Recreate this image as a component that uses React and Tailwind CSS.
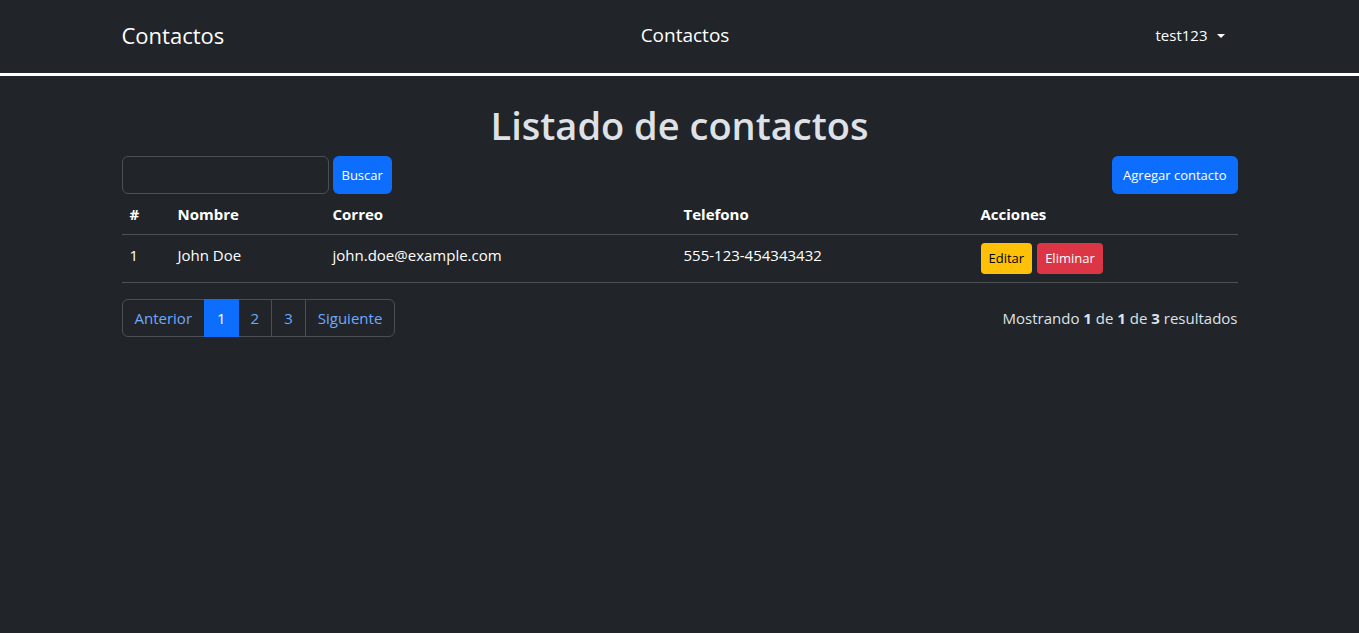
import React from 'react';

const contacts = [
  { id: 1, name: 'John Doe', email: 'john.doe@example.com', phone: '555-123-454343432' },
];

function Navbar() {
  return (
    <nav className="h-[76px] border-b-[3px] border-white bg-[#212529]">
      <div className="mx-auto flex h-full max-w-[1140px] items-center justify-between px-3">
        <span className="w-[300px] pb-[4px] text-[22px] leading-[30px] text-white">Contactos</span>
        <span className="pb-[2px] text-[19px] text-white">Contactos</span>
        <div className="flex w-[289px] justify-end pr-[13px]">
          <button className="flex items-center pb-[2px] text-[15px] text-white">
            test123
            <span className="ml-[9px] inline-block h-0 w-0 border-x-[4px] border-t-[4px] border-x-transparent border-t-white" />
          </button>
        </div>
      </div>
    </nav>
  );
}

function Pagination() {
  const cell = 'flex h-[38px] items-center border border-[#495057] px-3 text-[15px] text-[#6ea8fe] -ml-px';
  return (
    <div className="flex">
      <a className={`${cell} ml-0 rounded-l-[6px]`}>Anterior</a>
      <a className="relative z-10 -ml-px flex h-[38px] items-center border border-[#0d6efd] bg-[#0d6efd] px-3 text-[15px] text-white">1</a>
      <a className={cell}>2</a>
      <a className={cell}>3</a>
      <a className={`${cell} rounded-r-[6px]`}>Siguiente</a>
    </div>
  );
}

export default function App() {
  return (
    <div className="min-h-[633px] bg-[#212529] font-['Open_Sans',sans-serif] text-[#dee2e6]">
      <Navbar />
      <main className="mx-auto max-w-[1140px] px-3 pt-[25px]">
        <h1 className="mb-[7px] text-center text-[38px] font-semibold leading-[48px] text-[#dee2e6]">
          Listado de contactos
        </h1>

        <div className="flex items-center justify-between">
          <div className="flex gap-1">
            <input className="h-[38px] w-[207px] rounded-[6px] border border-[#495057] bg-[#212529] px-3 text-[15px] text-white outline-none" />
            <button className="h-[38px] rounded-[6px] bg-[#0d6efd] px-[9px] pt-[1px] text-[13px] text-white">Buscar</button>
          </div>
          <button className="h-[38px] rounded-[6px] bg-[#0d6efd] px-[11px] pt-[1px] text-[13px] text-white">Agregar contacto</button>
        </div>

        <table className="w-full border-collapse text-left text-[15px] text-white">
          <thead>
            <tr className="border-b border-[#4d5154]">
              <th className="w-[48px] px-2 py-2 font-bold leading-6">#</th>
              <th className="w-[155px] px-2 py-2 font-bold leading-6">Nombre</th>
              <th className="w-[351px] px-2 py-2 font-bold leading-6">Correo</th>
              <th className="w-[297px] px-2 py-2 font-bold leading-6">Telefono</th>
              <th className="px-2 py-2 font-bold leading-6">Acciones</th>
            </tr>
          </thead>
          <tbody>
            {contacts.map((c) => (
              <tr key={c.id} className="border-b border-[#4d5154]">
                <td className="px-2 py-2 align-top leading-6">{c.id}</td>
                <td className="px-2 py-2 align-top leading-6">{c.name}</td>
                <td className="px-2 py-2 align-top leading-6">{c.email}</td>
                <td className="px-2 py-2 align-top leading-6">{c.phone}</td>
                <td className="px-2 py-2 align-top">
                  <div className="flex gap-[5px]">
                    <button className="h-[31px] rounded-[4px] bg-[#ffc107] px-2 text-[13px] text-black">Editar</button>
                    <button className="h-[31px] rounded-[4px] bg-[#dc3545] px-2 text-[13px] text-white">Eliminar</button>
                  </div>
                </td>
              </tr>
            ))}
          </tbody>
        </table>

        <div className="mt-4 flex items-center justify-between">
          <Pagination />
          <p className="text-[15px] text-[#dee2e6]">
            Mostrando <b>1</b> de <b>1</b> de <b>3</b> resultados
          </p>
        </div>
      </main>
    </div>
  );
}
